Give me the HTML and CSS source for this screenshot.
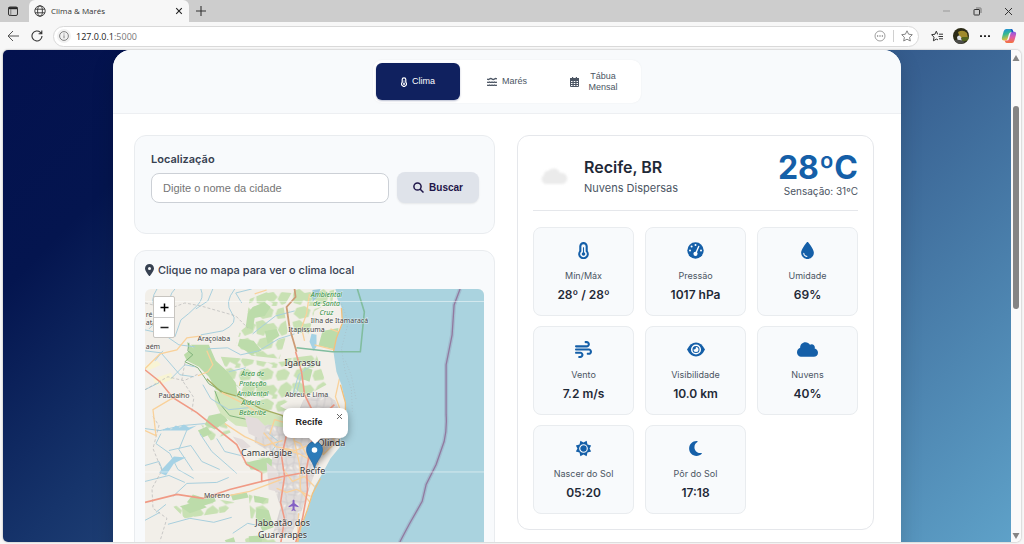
FILE: index.html
```html
<!DOCTYPE html>
<html lang="pt-BR">
<head>
<meta charset="utf-8">
<meta name="viewport" content="width=device-width, initial-scale=1">
<title>Clima &amp; Marés</title>
<link rel="stylesheet" href="styles.css">
</head>
<body>
<svg class="defs" aria-hidden="true">
  <symbol id="i-thermo" viewBox="0 0 10 16"><path fill="none" stroke="currentColor" stroke-width="2" d="M2 4a3 3 0 0 1 6 0v4.600a4 4 0 1 1-6 0z"/><circle cx="5" cy="11.300" r="1.700" fill="currentColor"/><path stroke="currentColor" stroke-width="1" d="M5 5v6"/></symbol>
  <symbol id="i-pin" viewBox="0 0 384 512"><path fill="currentColor" d="M215.700 499.200C267 435 384 279.400 384 192C384 86 298 0 192 0S0 86 0 192c0 87.400 117 243 168.300 307.200c12.300 15.300 35.100 15.300 47.400 0zM192 128a64 64 0 1 1 0 128 64 64 0 1 1 0-128z"/></symbol>
  <symbol id="i-cloud" viewBox="0 0 640 512"><path fill="currentColor" d="M0 336c0 79.500 64.500 144 144 144H512c70.700 0 128-57.300 128-128c0-61.900-44-113.600-102.400-125.400c4.100-10.700 6.400-22.400 6.400-34.600c0-53-43-96-96-96c-19.700 0-38.100 6-53.300 16.200C367 64.200 315.300 32 256 32C167.600 32 96 103.600 96 192c0 2.700 .1 5.400 .2 8.100C40.200 219.800 0 273.200 0 336z"/></symbol>
</svg>

<header class="browser">
  <div class="tabstrip">
    <button class="chrome-btn workspace" aria-label="Menu de guias"><svg width="12" height="12" viewBox="0 0 12 12"><rect x="1.500" y="2" width="9" height="8.500" rx="1.500" fill="none" stroke="#333"/><path d="M1.500 3.200h9" stroke="#222" stroke-width="2"/><path d="M3.800 4v6.500" stroke="#777"/></svg></button>
    <div class="tab">
      <svg width="12" height="12" viewBox="0 0 12 12" fill="none" stroke="#333" stroke-width="0.900"><circle cx="6" cy="6" r="5.200"/><ellipse cx="6" cy="6" rx="2.400" ry="5.200"/><path d="M1.200 4.200h9.600M1.200 7.800h9.600"/></svg>
      <span class="tab-title">Clima &amp; Marés</span>
      <button class="chrome-btn" aria-label="Fechar guia"><svg width="8" height="8" viewBox="0 0 8 8"><path d="M1.200 1.200l5.600 5.600M6.800 1.200L1.200 6.800" stroke="#222" stroke-width="1.100"/></svg></button>
    </div>
    <button class="chrome-btn newtab" aria-label="Nova guia"><svg width="12" height="12" viewBox="0 0 12 12"><path d="M6 1v10M1 6h10" stroke="#333" stroke-width="1.100"/></svg></button>
    <div class="window-controls">
      <button class="chrome-btn" aria-label="Minimizar"><svg width="9" height="9" viewBox="0 0 9 9"><path d="M1 4h7" stroke="#999"/></svg></button>
      <button class="chrome-btn" aria-label="Restaurar"><svg width="9" height="9" viewBox="0 0 9 9" fill="none" stroke="#333"><rect x="1" y="2.500" width="5.500" height="5.500" rx="0.500"/><path d="M3 1h4.500q.5 0 .5.500V6" stroke="#777"/></svg></button>
      <button class="chrome-btn" aria-label="Fechar"><svg width="9" height="9" viewBox="0 0 9 9"><path d="M1 1l7 7M8 1L1 8" stroke="#333"/></svg></button>
    </div>
  </div>
  <div class="toolbar">
    <button class="chrome-btn" aria-label="Voltar"><svg width="12" height="12" viewBox="0 0 12 12" fill="none" stroke="#555"><path d="M12 6H1M6 1L1 6l5 5"/></svg></button>
    <button class="chrome-btn" aria-label="Atualizar"><svg width="12" height="12" viewBox="0 0 12 12" fill="none" stroke="#333" stroke-width="1.100"><path d="M11 6a5 5 0 1 1-1.600-3.700L10.800 3.600M10.800 .5v3.200H7.600"/></svg></button>
    <div class="address">
      <button class="chrome-btn info" aria-label="Informações do site"><svg width="10" height="10" viewBox="0 0 10 10" fill="none" stroke="#777" stroke-width="0.900"><circle cx="5" cy="5" r="4.400"/><path d="M5 4.300v3M5 2.500v1"/></svg></button>
      <span class="url">127.0.0.1<span class="port">:5000</span></span>
      <button class="chrome-btn" aria-label="Opções"><svg width="12" height="12" viewBox="0 0 12 12"><circle cx="6" cy="6" r="5" fill="none" stroke="#888" stroke-width="0.800"/><path d="M3 6h1.200M5.400 6h1.200M7.800 6H9" stroke="#555" stroke-width="1.200"/></svg></button>
      <span class="sep"></span>
      <button class="chrome-btn" aria-label="Favoritar"><svg width="12" height="12" viewBox="0 0 12 12"><path fill="none" stroke="#777" stroke-width="0.900" d="M6 .8l1.600 3.400 3.700.5-2.700 2.600.7 3.700L6 9.200 2.700 11l.7-3.700L.7 4.700l3.700-.5z"/></svg></button>
    </div>
    <div class="tools">
      <button class="chrome-btn" aria-label="Favoritos"><svg width="12" height="12" viewBox="0 0 12 12" fill="none" stroke="#333"><path d="M7 4.200H6.600L5.300 1.200 4 4.200l-3.400.5L3 7.200l-.6 3.600 3-1.700 1.600.8M8 4.200h4M7.500 6.500H12M8 8.800h4"/></svg></button>
      <button class="chrome-btn" aria-label="Perfil"><svg width="16" height="16" viewBox="0 0 16 16"><clipPath id="av"><circle cx="8" cy="8" r="8"/></clipPath><g clip-path="url(#av)"><path fill="#2b2a16" d="M0 0h16v16H0z"/><path fill="#a08a2c" d="M5 4q5-3 9 1l1 5H7z"/><path fill="#54651f" d="M9 9h7v3L9 14z"/><path fill="#dde1e6" d="M4 9q2-3 4 0l1 5H5z"/><path fill="#4b4c49" d="M0 13q5-3 12 1l-4 2H2z"/></g></svg></button>
      <button class="chrome-btn" aria-label="Mais"><svg width="10" height="10" viewBox="0 0 10 10"><path fill="#222" d="M0 4.200h2v1.800H0zM4 4.200h2v1.800H4zM8 4.200h2v1.800H8z"/></svg></button>
      <button class="chrome-btn" aria-label="Copilot"><svg width="16" height="16" viewBox="0 0 16 16"><defs><linearGradient id="c1" x2="0.300" y2="1"><stop offset="0" stop-color="#1a86e8"/><stop offset=".5" stop-color="#38b98f"/><stop offset="1" stop-color="#f2c034"/></linearGradient><linearGradient id="c2" x2="0" y2="1"><stop offset="0" stop-color="#8b5ce6"/><stop offset=".5" stop-color="#e25aa6"/><stop offset="1" stop-color="#f4743b"/></linearGradient></defs><path fill="url(#c1)" d="M5 1h5q1.500 0 2 2l.4 1.200H10q-1.500 0-2 1.600L6.500 11Q6 12.500 4.500 12.500H3Q.3 12.500 1 9.500L2.600 3.600Q3.300 1 5 1z"/><path fill="url(#c2)" d="M11 15H6q-1.500 0-2-1.500l-.4-1H6q1.500 0 2-1.600L9.500 5.500q.5-1.800 2-1.800H13q2.700 0 2 3L13.400 12.400Q12.700 15 11 15z"/><path fill="#1d50ca" d="M9.500 1h.8q1.300 0 1.700 1.700l.5 1.500H11z"/></svg></button>
    </div>
  </div>
</header>

<div class="viewport">
  <div class="page">
    <div class="app">
      <nav class="app-nav">
        <div class="pills">
          <button class="pill active"><svg width="6" height="10"><use href="#i-thermo"/></svg><span>Clima</span></button>
          <button class="pill"><svg width="10" height="10" viewBox="0 0 10 10" fill="none" stroke="currentColor" stroke-width="1.400"><path d="M0 2q1.250 1 2.500 0t2.500 0 2.500 0 2.500 0" /><path d="M0 5q1.250 .8 2.500 0 1.250 .8 2.500 0 1.250 .8 2.500 0 1.250 .8 2.500 0M0 8q1.250 .8 2.500 0 1.250 .8 2.500 0 1.250 .8 2.500 0 1.250 .8 2.500 0"/></svg><span>Marés</span></button>
          <button class="pill"><svg width="9" height="10" viewBox="0 0 9 10"><path fill="currentColor" fill-rule="evenodd" d="M2 0h1.200v1h2.600V0H7v1h2v8q0 1-1 1H1q-1 0-1-1V1h2zM1 4v1h1.500V4zm2.700 0v1h1.600V4zm2.800 0v1H8V4zM1 6v1h1.500V6zm2.700 0v1h1.600V6zm2.800 0v1H8V6zM1 8v1h1.500V8zm2.700 0v1h1.600V8zm2.800 0v1H8V8z"/></svg><span class="two-line">Tábua Mensal</span></button>
        </div>
      </nav>

      <main class="content">
        <div class="column">
          <section class="card search">
            <label class="field-label" for="city">Localização</label>
            <div class="search-row">
              <input class="city" id="city" type="text" placeholder="Digite o nome da cidade">
              <button class="buscar"><svg width="11" height="11" viewBox="0 0 11 11" fill="none" stroke="currentColor" stroke-width="1.500"><circle cx="4.500" cy="4.500" r="3.600"/><path d="M7.200 7.200L10.500 10.500"/></svg>Buscar</button>
            </div>
          </section>

          <section class="card map-card">
            <h2 class="map-title"><svg width="9" height="12"><use href="#i-pin"/></svg>Clique no mapa para ver o clima local</h2>
            <div class="map">
              <svg class="map-canvas" viewBox="0 0 340 300" preserveAspectRatio="xMidYMin slice">
                <defs>
                  <pattern id="urban" width="23" height="19" patternUnits="userSpaceOnUse"><rect width="23" height="19" fill="#e0dcda"/><path d="M0 4l6 2 5-3 7 2 5-1M3 0l2 7-3 6 2 6M0 13l8-2 6 3 9-1M12 0l-2 8 3 5-2 6M19 0l-2 9 3 4-1 6M5 16l9 1" stroke="#cbc8ca" stroke-width="0.800" fill="none"/><path d="M7 8l3 1M14 6l2 3M15 16l3-2M1 9l2-1" stroke="#f7f3ec" stroke-width="1.500"/></pattern>
                  <pattern id="woods" width="37" height="31" patternUnits="userSpaceOnUse"><path fill="#c8e1b3" d="M0 2l7-2 5 4 6-1 4 5-5 6-6-3-3 5-7-2zM25 4l6-4 6 5-3 8-8 3-4-6zM4 19l8-2 6 4-2 7-9 2-6-5zM22 20l7-2 5 4-3 7-9 1-2-5zM18 12l4 1-1 4-5 0z"/></pattern>
                  <linearGradient id="pin" x2="0" y2="1"><stop offset="0" stop-color="#2e7ebd"/><stop offset="1" stop-color="#2c78b4"/></linearGradient>
                  <filter id="soft"><feGaussianBlur stdDeviation="2.500"/></filter>
                </defs>
                <path fill="#f2efe9" d="M0 0h340v300H0z"/>
                <g fill="url(#woods)">
                  <path d="M105 10l20-8 22 2-8 14 4 24-8 28-28-3-16-10 4-14 12-10-4-10z"/>
                  <path d="M76 68l26 2 24 4 20-2 6 36-18 10-30-10-18-16z"/>
                  <path d="M150 0l40 0-2 12-18 10-6 24-14-4-6-20z"/>
                  <path d="M140 70l32-4 10 30-22 12-16-14zM84 104l34 4 26 14-2 26-30-14-26-16z"/>
                  <path d="M28 218l40-8 22 4-10 10-40 6zM56 136l22-6 8 14-20 8zM96 172l30-4 10 10-18 8zM104 206l20 4-2 26-16-6zM100 250l32-6 6 30-30 8z"/>
                </g>
                <g fill="#bcdcaa">
                  <path d="M64 127l14-3 5 8-13 9-10-5zM53 142l9-4 5 7-9 4zM102 174l22-5 9 6-12 7-15-1zM48 206l13 4 8-3 2 6-16 6-13-5zM86 206l16-2 2 5-16 3zM109 207l13 3-4 5-8-1zM112 220l12 2 5 17-11 4-7-14zM35 218l18-5 9 6-17 6zM80 252l9-3 2 6-8 2zM104 248l14-1-1 7-12 1z"/>
                  <path d="M108 18l12-5 6 5-6 9-10 2-2 12-7-3 2-14zM120 42l12-2 3 7-12 8zM95 50l14 2 8 10-10 4-14-9zM160 78l8 3-3 12-8-3zM178 42l16-3-2 22-18-4z"/>
                </g>
                <path fill="#bbdba8" d="M46 56l18 0 7 16 11 10 9 12 2 13-12-2-10-4-7-13-10-10-12-6-3-6 5-4-2-9 7 7z"/>
                <path fill="#d3e6bd" d="M70 102l24 5 22 12 12 5 12 6 5 16-5 13-19-12-16-8-14-2-15-12-6-12z"/>
                <path fill="none" stroke="#7fb27a" d="M44 54l-1 8 5 4-8 7 13 6 11 16 14 8M70 102l5 13 10 12 18 4 16 9 18 19"/>
                <path fill="none" stroke="#a4ae60" stroke-width="1.300" d="M62 90l14 13 18 5 22 12 22 7 8 16"/>
                <path fill="url(#urban)" d="M159 111l20-7 12 8 8 21-10 22-13 15-10 26-8 24-12 28-18-2 8-27-10-30 2-24-18-11 0-12 13-6 16 3 8 9 5-21z"/>
                <path fill="#e3dcdb" d="M100 127l13 3 8 8-4 13-13-6zM122 174l10 8 4 22-12-3zM88 148l10 3 8 7-8 4z"/>
                <path fill="#f8f4d4" d="M8 90l18-6 3 6-18 7zM0 77l12-5 4 4-13 6z"/>
                <g fill="none" stroke="#a8cfdd" stroke-width="1">
                  <path d="M12 0q-8 12-1 20t-7 20M30 0q-8 8-3 17t-8 19l-8 10M56 0q4 9-4 17t-16 14l-6 17M68 0l-5 12-12 8M90 0q-11 14-3 24t-9 18l-22 4M107 0l-16 4 6 10M150 22l-19 5-13 10-10 8"/>
                  <path d="M150 45l-16 5-20 12-18 4-13-7-20 1M0 41l18 4 16 11 16 2M0 62l16 2 19 22 14 2M10 72l8-10M26 90l14-14 10 2M84 83l17-4M0 101l14-7M58 96l8 14 18 11 20-2M170 74l-16 12-6 21M151 108l6-22"/>
                  <path d="M0 140l15 2 22-5 23-2M16 145l-5 10 14 10 8 16 16 9M24 162l22-5 11 16 18 8M43 139l-9 22 14 21M55 145l12 18 16 14 9 8M0 193l24-6 16 7M28 208l14-13 30-1 12-5M11 224l10-8M23 236l22-6 24 4 18-5M88 245l15-10 9 2M0 232l15-8M72 150l8 13 16 4M0 177l14-4 4 10M124 145l10 8-7 10"/>
                </g>
                <g fill="#a5d2e5"><path d="M14 184l15-16 12 1-12 6-8 12zM18 141l5-2 3 2 5-4 4 2 4-3 5 3 8-2-9 5h-25zM167 45l5 1 0 12-3 4-4-9z"/></g>
                <g fill="none" stroke="#b7b7b7" stroke-width="0.700" stroke-dasharray="3 2"><path d="M0 14l24 6 16-6 16 3 35 10 12 12M40 74l-3 17 12 18-2 14M8 128l6 9-6 23 9 22-10 18 1 20 14 10-7 23M0 101l23-13 16 4 15-7"/></g>
                <g fill="none" stroke="#f9d19a" stroke-width="1.300">
                  <path d="M0 80l15-15 17-4 10-12 15-2M62 62l6 14-5 7-10 4M77 104l24 12 16 11M0 142l11 5-3-26 17-10 16-6M110 5l12-4M80 135l20 13 20 9 18-5M138 180l10 13 12-5 10 10M132 200l10 4 10-3 14 7M154 225l-1 30M195 90l-4 18 8 22-16 12-5 24M162 136l20 2 9 16-12 12-7-8-8 12-8-15-7-3"/>
                  <path d="M147 140l8 36 1 26 11 14-14 36M138 160l16 5 20 11M119 144l12 14 20 4 19-8M125 146l5-15 20 6 18-4M165 5l-3 20-5 14 3 13M60 208l25-1 20-4 32-12M186 40l10 4-2 18-24-6"/>
                </g>
                <g fill="none" stroke="#f09a85" stroke-width="1.600">
                  <path d="M151 63l6 20 3 23 7 14 2 18-3 22-4 20 1 22-5 28-9 32M0 81l15 12 13 16 24 15 15 12 25 20 10 20 15 8v10M0 214l32-8 26 4 27-9 32-8 21-5 22-4M142 146l-5 22 3 20-4 26 4 17-5 31M167 120l14 4 9-8M169 137l14-4"/>
                </g>
                <path fill="none" stroke="#cd9b75" stroke-width="1.800" d="M150 0l1 8-9 10 3 21 7 24"/>
                <path fill="#aad3df" d="M191 0l2 10 4 8 1 16-6 15-3 14 3 20 5 13 4 18 1 10-4 13-3 22-9 11-8 15-8 13-5 18-8 22-7 28-4 40h194V0z"/>
                <path fill="#9ec9da" d="M168 1l8-1-3 8-5 5z"/>
                <path fill="none" stroke="#f2c07b" stroke-width="1.300" d="M197 19l1 15-6 15-3 14M196 96l5 18 0 14-16 12M176 190l-8 15-5 16-7 19-3 15"/>
                <path fill="none" stroke="#a8b8bf" stroke-width="0.600" stroke-dasharray="1 2" d="M196 12l8 21-7 27 4 24 6 16 1 23M201 72l6 15 5 25"/>
                <path fill="none" stroke="#81bd9f" stroke-width="1.600" d="M213 0l7 23-4 40h-28l-36-4"/>
                <path fill="none" stroke="#84739d" stroke-opacity=".22" stroke-width="4" d="M316 0l-6 16-2 30-6 30v50q1 14-2 27l-8 23-10 20-4 17-13 23-9 17-12 40"/>
                <path fill="none" stroke="#91799f" stroke-width="1.300" d="M316 0l-6 16-2 30-6 30v50q1 14-2 27l-8 23-10 20-4 17-13 23-9 17-12 40"/>
                <path stroke="#fff" stroke-opacity=".5" d="M0 12.500h340M0 183.500h340"/>
                <g class="park"><text x="182" y="8">Ambiental</text><text x="182" y="17">de Santa</text><text x="182" y="26">Cruz</text><text x="108" y="87">Área de</text><text x="108" y="97">Proteção</text><text x="108" y="107">Ambiental</text><text x="108" y="116">Aldeia -</text><text x="108" y="126">Beberibe</text></g>
                <g class="town"><text x="195" y="34">Ilha de Itamaracá</text><text x="162" y="43">Itapissuma</text><text x="69" y="52">Araçoiaba</text><text x="29" y="109">Paudalho</text><text x="162" y="108">Abreu e Lima</text><text x="72" y="210">Moreno</text><text x="4" y="28">ré</text><text x="6" y="36">ata</text><text x="8" y="60">aém</text></g>
                <g class="city-name"><text x="158" y="77">Igarassu</text><text x="122" y="168">Camaragibe</text><text x="187" y="157">Olinda</text><text x="168" y="186">Recife</text><text x="138" y="238">Jaboatão dos</text><text x="138" y="250">Guararapes</text></g>
                <path fill="#8461c4" d="M149 211l1 1v3l4 3v1l-4-1v3l1 1v1l-2-1-2 1v-1l1-1v-3l-4 1v-1l4-3v-3z"/>
                <path d="M170 179l5-22 17-8-8 16z" opacity=".3" filter="url(#soft)"/>
                <path fill="url(#pin)" stroke="#24659e" stroke-width="0.700" d="M170 180c-2-8-8-12-8-19a8 8 0 0 1 16 0c0 7-6 11-8 19z"/><circle cx="170" cy="161.500" r="2.800" fill="#fff"/>
              </svg>
              <div class="zoomer"><button aria-label="Aproximar"><svg width="9" height="9" viewBox="0 0 9 9"><path d="M4.500 .5v8M.5 4.500h8" stroke="#000" stroke-width="1.500"/></svg></button><button aria-label="Afastar"><svg width="9" height="9" viewBox="0 0 9 9"><path d="M.5 4.500h8" stroke="#222" stroke-width="1.300"/></svg></button></div>
              <div class="popup"><strong>Recife</strong><button class="popup-close" aria-label="Fechar"><svg width="7" height="7" viewBox="0 0 7 7"><path d="M1 1l5 5M6 1L1 6" stroke="#666"/></svg></button></div>
            </div>
          </section>
        </div>

        <section class="card weather">
          <div class="summary">
            <svg class="sky" width="40" height="40" viewBox="0 0 40 40"><path fill="#ebebeb" d="M12 28a5 5 0 0 1-1-9 4 4 0 0 1 4-4 7 7 0 0 1 12 2 5 5 0 0 1 3 11z"/></svg>
            <div class="place"><h1>Recife, BR</h1><p>Nuvens Dispersas</p></div>
            <div class="now"><p class="temp">28ºC</p><p class="feels">Sensação: 31ºC</p></div>
          </div>
          <div class="tiles">
            <div class="tile"><svg width="11" height="17"><use href="#i-thermo"/></svg><span class="name">Mín/Máx</span><strong>28º / 28º</strong></div>
            <div class="tile"><svg width="17" height="17" viewBox="0 0 17 17"><circle cx="8.500" cy="8.500" r="8.200" fill="currentColor"/><g fill="#fff"><circle cx="8.500" cy="3" r="1"/><circle cx="4.600" cy="4.600" r="1"/><circle cx="3" cy="8.500" r="1"/><circle cx="14" cy="8.500" r="1"/><circle cx="8.500" cy="11.800" r="2.100"/></g><path d="M8.700 11.500l3-7" stroke="#fff" stroke-width="1.400" stroke-linecap="round"/></svg><span class="name">Pressão</span><strong>1017 hPa</strong></div>
            <div class="tile"><svg width="13" height="17" viewBox="0 0 384 512"><path fill="currentColor" d="M192 512C86 512 0 426 0 320C0 228.800 130.200 57.700 166.600 11.700C172.600 4.200 181.500 0 191.100 0h1.800c9.600 0 18.500 4.200 24.500 11.700C253.800 57.700 384 228.800 384 320c0 106-86 192-192 192zM96 336c0-8.800-7.200-16-16-16s-16 7.200-16 16c0 61.900 50.100 112 112 112c8.800 0 16-7.200 16-16s-7.200-16-16-16c-44.200 0-80-35.800-80-80z"/></svg><span class="name">Umidade</span><strong>69%</strong></div>
            <div class="tile"><svg width="17" height="17" viewBox="0 0 512 512"><path fill="currentColor" d="M288 32c0 17.700 14.300 32 32 32h32c17.700 0 32 14.300 32 32s-14.300 32-32 32H32c-17.700 0-32 14.300-32 32s14.300 32 32 32H352c53 0 96-43 96-96s-43-96-96-96H320c-17.700 0-32 14.300-32 32zm64 352c0 17.700 14.300 32 32 32h32c53 0 96-43 96-96s-43-96-96-96H32c-17.700 0-32 14.300-32 32s14.300 32 32 32H416c17.700 0 32 14.300 32 32s-14.300 32-32 32H384c-17.700 0-32 14.300-32 32zM128 512h32c53 0 96-43 96-96s-43-96-96-96H32c-17.700 0-32 14.300-32 32s14.300 32 32 32H160c17.700 0 32 14.300 32 32s-14.300 32-32 32H128c-17.700 0-32 14.300-32 32s14.300 32 32 32z"/></svg><span class="name">Vento</span><strong>7.2 m/s</strong></div>
            <div class="tile"><svg width="18" height="17" viewBox="0 0 18 17"><path fill="currentColor" d="M0 8.500Q3.500 1.500 9 1.500t9 7q-3.500 7-9 7t-9-7z"/><circle cx="9" cy="8.500" r="4.300" fill="currentColor" stroke="#fff" stroke-width="1.500"/><path fill="#fff" d="M9 6a2.500 2.500 0 1 1-2.500 2.500Q9 9 9 6z"/></svg><span class="name">Visibilidade</span><strong>10.0 km</strong></div>
            <div class="tile"><svg width="21" height="17"><use href="#i-cloud"/></svg><span class="name">Nuvens</span><strong>40%</strong></div>
            <div class="tile"><svg width="17" height="17" viewBox="0 0 18 18"><path fill="currentColor" d="M9 2.600L12.300 .9l.9 3.900 3.900.9L15.400 9l1.700 3.300-3.900.9-.9 3.900L9 15.400l-3.300 1.700-.9-3.900-3.900-.9L2.600 9 .9 5.700l3.900-.9.900-3.900z"/><circle cx="9" cy="9" r="4" fill="currentColor" stroke="#fff" stroke-width="1.200"/></svg><span class="name">Nascer do Sol</span><strong>05:20</strong></div>
            <div class="tile"><svg width="13" height="17" viewBox="0 0 384 512"><path fill="currentColor" d="M223.500 32C100 32 0 132.300 0 256S100 480 223.500 480c60.600 0 115.500-24.200 155.800-63.400c5-4.900 6.300-12.500 3.100-18.700s-10.100-9.700-17-8.500c-9.800 1.700-19.800 2.600-30.100 2.600c-96.900 0-175.500-78.800-175.500-176c0-65.800 36-123.100 89.300-153.300c6.100-3.500 9.200-10.500 7.700-17.300s-7.300-11.900-14.300-12.500c-6.300-.5-12.600-.8-19-.8z"/></svg><span class="name">Pôr do Sol</span><strong>17:18</strong></div>
          </div>
        </section>
      </main>
    </div>
  </div>
  <div class="scrollbar" aria-hidden="true">
    <svg width="8" height="6" viewBox="0 0 8 6"><path fill="#858585" d="M4 0l3.500 6h-7z"/></svg>
    <div class="track"><div class="thumb"></div></div>
    <svg width="8" height="6" viewBox="0 0 8 6"><path fill="#858585" d="M4 6L.5 0h7z"/></svg>
  </div>
</div>
</body>
</html>
```
FILE: styles.css
```css
* { box-sizing: border-box; }
body {
  margin: 0;
  height: 100vh;
  display: flex;
  flex-direction: column;
  overflow: hidden;
  background: #f7f7f7;
  font-family: Inter, "Open Sans", sans-serif;
  color: #1f2937;
}
h1, h2, p { margin: 0; }
button { font: inherit; color: inherit; border: 0; background: none; padding: 0; cursor: pointer; }
svg { display: block; flex: none; }
.defs { position: absolute; width: 0; height: 0; }

/* Browser frame */
.browser { flex: none; font-family: "Open Sans", sans-serif; }
.chrome-btn { display: flex; align-items: center; justify-content: center; }
.tabstrip { display: flex; align-items: center; height: 22px; background: #cdcdcd; }
.workspace { width: 29px; padding-right: 3px; height: 22px; }
.tab {
  display: flex;
  align-items: center;
  gap: 5px;
  width: 160px;
  height: 22px;
  padding: 0 6px 0 5px;
  background: #f7f7f7;
  border-radius: 6px 6px 0 0;
}
.tab-title { flex: 1; font-size: 8px; line-height: 12px; color: #333; }
.newtab { margin-left: 6px; }
.window-controls { display: flex; gap: 22px; margin-left: auto; padding-right: 11px; }
.toolbar { display: flex; align-items: center; height: 28px; gap: 12px; padding: 0 7px; }
.address {
  flex: 1;
  display: flex;
  align-items: center;
  gap: 7px;
  height: 21px;
  margin: 0 -2px;
  padding: 0 5px 0 3px;
  border: 1px solid #d9d9d9;
  border-radius: 11px;
  background: #fff;
}
.info { width: 14px; height: 14px; border-radius: 7px; background: #f1f1f1; }
.info + .url { margin-left: -2px; }
.url { flex: 1; font-size: 9px; color: #222; }
.port { color: #777; }
.sep { width: 1px; height: 12px; background: #d0d0d0; }
.tools { display: flex; align-items: center; gap: 8px; }
.tools .chrome-btn { min-width: 16px; }

.viewport {
  flex: 1;
  min-height: 0;
  display: flex;
  margin: 0 3px 2px;
  border-radius: 5px;
  overflow: hidden;
  box-shadow: 0 0 2px #999;
}
.page {
  flex: 1;
  overflow: hidden;
  background: linear-gradient(135deg, #03114e 0%, #04154f 16%, #16346b 34%, #375f90 62%, #5ea1c8 100%);
}
.scrollbar {
  display: flex;
  flex-direction: column;
  align-items: center;
  gap: 4px;
  width: 10px;
  padding: 5px 0 3px;
  background: #fafafa;
}
.track { flex: 1; width: 6px; padding-top: 41px; }
.thumb { height: 48%; border-radius: 3px; background: #858585; }

/* App */
.app {
  max-width: 788px;
  margin: 0 auto;
  background: #fff;
  border-radius: 18px 18px 0 0;
  overflow: hidden;
  box-shadow: 0 8px 22px rgba(0, 0, 0, 0.15);
}
.app-nav {
  display: flex;
  justify-content: center;
  padding: 10px;
  background: #f8fafc;
  border-bottom: 1px solid #edeff2;
}
.pills {
  display: flex;
  gap: 5px;
  padding: 3px;
  border-radius: 9px;
  background: #fff;
  box-shadow: 0 0 2px rgba(0, 0, 0, 0.06);
}
.pill {
  display: flex;
  align-items: center;
  justify-content: center;
  gap: 5px;
  width: 84px;
  min-height: 37px;
  padding: 4px 12px;
  border-radius: 6px;
  font-family: "Liberation Sans", sans-serif;
  font-size: 9px;
  line-height: 11px;
  color: #4b5563;
}
.two-line { width: 38px; }
.pill.active { background: #10215f; color: #fff; box-shadow: 0 1px 2px rgba(16, 33, 95, 0.3); }
.content {
  display: grid;
  grid-template-columns: minmax(0, 361fr) minmax(0, 357fr);
  gap: 22px;
  align-items: start;
  padding: 21px 27px 22px 21px;
}
.column { display: grid; gap: 16px; }
.card { border: 1px solid #e9ecef; border-radius: 12px; background: #f8fafc; }
.search { padding: 15px 15px 30px 16px; }
.field-label { display: block; font-size: 11px; line-height: 16px; font-weight: 600; color: #374151; }
.search-row { display: flex; align-items: stretch; gap: 8px; margin-top: 5px; }
.city {
  flex: 1;
  min-width: 0;
  margin-top: 1px;
  padding: 0 11px;
  border: 1px solid #ccd0d6;
  border-radius: 8px;
  background: #fff;
  font: 11px/14px "Liberation Sans", sans-serif;
}
.city::placeholder { color: #757575; }
.buscar {
  display: flex;
  align-items: center;
  justify-content: center;
  gap: 5px;
  height: 31px;
  padding: 0 16px;
  border-radius: 8px;
  background: #dfe3ea;
  box-shadow: 0 1px 2px rgba(0, 0, 0, 0.08);
  font: bold 10px/14px "Liberation Sans", sans-serif;
  color: #1e1548;
}
.map-card { padding: 11px 10px; }
.map-title {
  display: flex;
  align-items: center;
  gap: 4px;
  font-size: 11px;
  line-height: 16px;
  font-weight: 500;
  color: #374151;
}
.map { position: relative; margin-top: 11px; border-radius: 6px; overflow: hidden; }
.map-canvas { width: 100%; height: auto; }
.map-canvas text { font-family: "Noto Sans", sans-serif; text-anchor: middle; paint-order: stroke; stroke: rgba(255, 255, 255, 0.6); stroke-width: 1px; }
.park text { font-size: 7px; font-style: italic; fill: #2d8c3c; }
.town text { font-size: 7px; fill: #444; }
.city-name text { font-size: 9px; fill: #333; }
.zoomer {
  position: absolute;
  left: 8px;
  top: 7px;
  display: grid;
  border: 1px solid #c8c5c0;
  border-radius: 2px;
  background: #fff;
}
.zoomer button { display: grid; place-items: center; width: 20px; height: 20px; }
.zoomer button + button { border-top: 1px solid #ccc; }
.popup {
  position: absolute;
  left: 50%;
  top: 119px;
  width: 65px;
  margin-left: -32px;
  padding: 8px 13px 9px;
  border-radius: 8px;
  background: #fff;
  box-shadow: 0 2px 8px rgba(0, 0, 0, 0.35);
  font: 9px/13px "Liberation Sans", sans-serif;
  color: #222;
}
.popup::after {
  content: "";
  position: absolute;
  left: 50%;
  bottom: -6px;
  margin-left: -7px;
  border: 7px solid transparent;
  border-top-color: #fff;
  border-bottom: 0;
}
.popup-close { position: absolute; top: 5px; right: 5px; }

/* Weather */
.weather { padding: 16px 15px 15px; background: #fff; border-color: #e5e7eb; }
.summary {
  display: flex;
  align-items: center;
  gap: 11px;
  padding-bottom: 11px;
  border-bottom: 1px solid #e5e7eb;
}
.sky { filter: blur(1px); }
.place { flex: 1; }
.place h1 { font-size: 16px; line-height: 24px; font-weight: 600; }
.place p { font-size: 11px; line-height: 18px; color: #4b5563; }
.now { text-align: right; }
.temp { font-size: 32px; line-height: 32px; font-weight: 700; color: #155fa8; }
.feels { font-size: 10px; line-height: 15px; color: #4b5563; }
.tiles { display: grid; grid-template-columns: repeat(3, minmax(0, 1fr)); gap: 10px 11px; margin-top: 16px; }
.tile {
  display: flex;
  flex-direction: column;
  align-items: center;
  padding: 14px 8px 11px;
  border: 1px solid #e9ecef;
  border-radius: 8px;
  background: #f8fafc;
  color: #155fa8;
}
.tile .name { margin-top: 10px; font-size: 9px; line-height: 14px; color: #4b5563; }
.tile strong { margin-top: 3px; font-size: 12px; line-height: 18px; font-weight: 600; color: #1f2937; }
```
